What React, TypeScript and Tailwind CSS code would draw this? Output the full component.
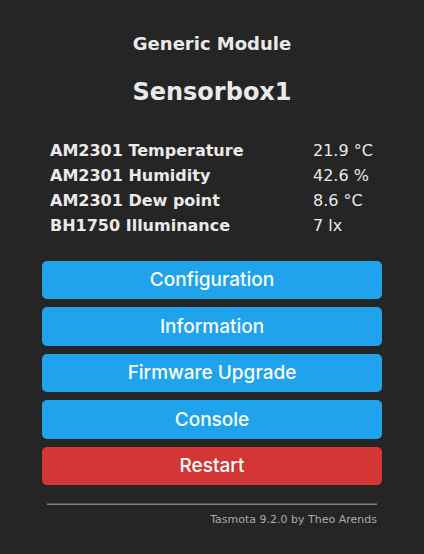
const readings = [
  { name: 'AM2301 Temperature', value: '21.9 °C' },
  { name: 'AM2301 Humidity', value: '42.6 %' },
  { name: 'AM2301 Dew point', value: '8.6 °C' },
  { name: 'BH1750 Illuminance', value: '7 lx' },
];

const actions = [
  { label: 'Configuration', color: 'bg-[#1fa3ec]' },
  { label: 'Information', color: 'bg-[#1fa3ec]' },
  { label: 'Firmware Upgrade', color: 'bg-[#1fa3ec]' },
  { label: 'Console', color: 'bg-[#1fa3ec]' },
  { label: 'Restart', color: 'bg-[#d43535]' },
];

export default function App() {
  return (
    <main className="min-h-screen bg-[#252525] px-[42px] pt-8 font-[Verdana,'DejaVu_Sans',sans-serif] text-[#eaeaea]">
      <header className="text-center font-bold">
        <h3 className="text-[18px] leading-6">Generic Module</h3>
        <h2 className="mt-5 text-[24px] leading-8">Sensorbox1</h2>
      </header>
      <table className="mt-[30px] w-full text-[16px] leading-[25px]">
        <tbody>
          {readings.map((r) => (
            <tr key={r.name}>
              <th scope="row" className="pl-2 text-left font-bold">{r.name}</th>
              <td className="w-[69px]">{r.value}</td>
            </tr>
          ))}
        </tbody>
      </table>
      <div className="mt-[23px] grid h-56 grid-rows-5 gap-2">
        {actions.map((a) => (
          <button
            key={a.label}
            type="button"
            className={`w-full rounded-[5px] pt-px font-[Inter,sans-serif] text-[19px] font-medium text-[#faffff] ${a.color}`}
          >
            {a.label}
          </button>
        ))}
      </div>
      <footer className="mx-[5px] mt-[18px] text-right text-[11px] leading-4 text-[#aaa]">
        <hr className="h-[2px] border-t border-b border-t-[#555] border-b-[#808080]" />
        <a href="#tasmota" className="mt-[7px] inline-block">Tasmota 9.2.0 by Theo Arends</a>
      </footer>
    </main>
  );
}
